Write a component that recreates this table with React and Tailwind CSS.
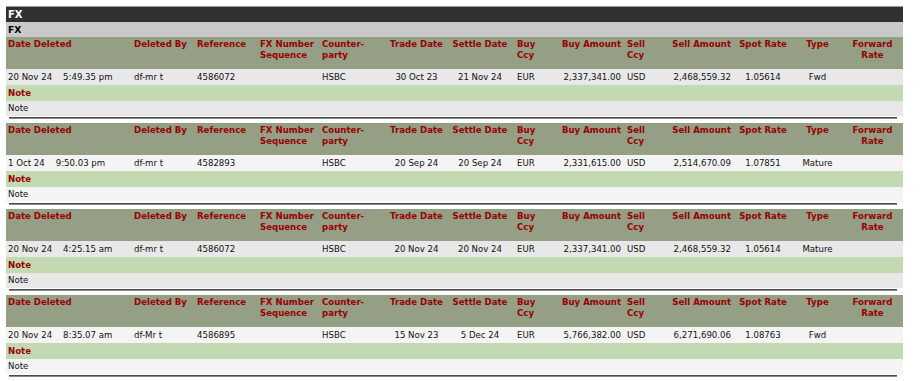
import React from "react";

const COLS =
  "grid grid-cols-[126px_63px_63px_62px_66px_61px_66px_46px_64px_46px_64px_60px_49px_61px]";

const rows = [
  {
    date: "20 Nov 24",
    time: "5:49.35 pm",
    by: "df-mr t",
    ref: "4586072",
    cp: "HSBC",
    trade: "30 Oct 23",
    settle: "21 Nov 24",
    buyCcy: "EUR",
    buyAmt: "2,337,341.00",
    sellCcy: "USD",
    sellAmt: "2,468,559.32",
    spot: "1.05614",
    type: "Fwd",
  },
  {
    date: "1 Oct 24",
    time: "9:50.03 pm",
    by: "df-mr t",
    ref: "4582893",
    cp: "HSBC",
    trade: "20 Sep 24",
    settle: "20 Sep 24",
    buyCcy: "EUR",
    buyAmt: "2,331,615.00",
    sellCcy: "USD",
    sellAmt: "2,514,670.09",
    spot: "1.07851",
    type: "Mature",
  },
  {
    date: "20 Nov 24",
    time: "4:25.15 am",
    by: "df-mr t",
    ref: "4586072",
    cp: "HSBC",
    trade: "20 Nov 24",
    settle: "20 Nov 24",
    buyCcy: "EUR",
    buyAmt: "2,337,341.00",
    sellCcy: "USD",
    sellAmt: "2,468,559.32",
    spot: "1.05614",
    type: "Mature",
  },
  {
    date: "20 Nov 24",
    time: "8:35.07 am",
    by: "df-Mr t",
    ref: "4586895",
    cp: "HSBC",
    trade: "15 Nov 23",
    settle: "5 Dec 24",
    buyCcy: "EUR",
    buyAmt: "5,766,382.00",
    sellCcy: "USD",
    sellAmt: "6,271,690.06",
    spot: "1.08763",
    type: "Fwd",
  },
];

function Header() {
  const c = "pt-[2px] leading-[11px] whitespace-nowrap";
  return (
    <div className={`${COLS} h-[32px] bg-[#949f86] font-bold text-[#990000]`}>
      <div className={`${c} pl-[2px]`}>Date Deleted</div>
      <div className={`${c} pl-[2px]`}>Deleted By</div>
      <div className={`${c} pl-[2px]`}>Reference</div>
      <div className={`${c} pl-[2px]`}>
        FX Number
        <br />
        Sequence
      </div>
      <div className={`${c} pl-[2px]`}>
        Counter-
        <br />
        party
      </div>
      <div className={`${c} text-center`}>Trade Date</div>
      <div className={`${c} text-center`}>Settle Date</div>
      <div className={`${c} pl-[4px]`}>
        Buy
        <br />
        Ccy
      </div>
      <div className={`${c} pr-[2px] text-right`}>Buy Amount</div>
      <div className={`${c} pl-[4px]`}>
        Sell
        <br />
        Ccy
      </div>
      <div className={`${c} pr-[2px] text-right`}>Sell Amount</div>
      <div className={`${c} text-center`}>Spot Rate</div>
      <div className={`${c} text-center`}>Type</div>
      <div className={`${c} text-center`}>
        Forward
        <br />
        Rate
      </div>
    </div>
  );
}

function Block({ r, alt }) {
  const bg = alt ? "bg-[#f4f4f4]" : "bg-[#e8e8e8]";
  const c = "leading-[16px] whitespace-nowrap";
  return (
    <div>
      <Header />
      <div className={`${COLS} h-[16px] ${bg} text-[#111111]`}>
        <div className={`${c} pl-[2px]`}>
          {r.date}
          {"\u00a0\u00a0\u00a0\u00a0"}
          {r.time}
        </div>
        <div className={`${c} pl-[2px]`}>{r.by}</div>
        <div className={`${c} pl-[2px]`}>{r.ref}</div>
        <div className={`${c} pl-[2px]`}></div>
        <div className={`${c} pl-[2px]`}>{r.cp}</div>
        <div className={`${c} text-center`}>{r.trade}</div>
        <div className={`${c} text-center`}>{r.settle}</div>
        <div className={`${c} pl-[4px]`}>{r.buyCcy}</div>
        <div className={`${c} pr-[2px] text-right`}>{r.buyAmt}</div>
        <div className={`${c} pl-[4px]`}>{r.sellCcy}</div>
        <div className={`${c} pr-[2px] text-right`}>{r.sellAmt}</div>
        <div className={`${c} text-center`}>{r.spot}</div>
        <div className={`${c} text-center`}>{r.type}</div>
        <div className={`${c} text-center`}></div>
      </div>
      <div className="h-[16px] bg-[#c3d9b1] pl-[2px] font-bold leading-[16px] text-[#990000]">
        Note
      </div>
      <div className={`h-[15px] ${bg} pl-[2px] leading-[15px] text-[#111111]`}>
        Note
      </div>
      <div className="h-[7px] pt-[1px] pl-[3px] pr-[6px] bg-white">
        <div className="h-[2px] border-t border-t-[#4a4a4a] border-b border-b-[#8a8a8a]"></div>
      </div>
    </div>
  );
}

export default function App() {
  return (
    <div
      className="min-h-screen bg-white pl-[6px] pt-[6px] text-[8.6px]"
      style={{ fontFamily: '"DejaVu Sans", Verdana, sans-serif' }}
    >
      <div className="w-[897px]">
        <div className="h-[16px] border-t border-t-[#9a9a9a] bg-[#313131] pl-[2px] text-[10px] font-bold leading-[15px] text-white">
          FX
        </div>
        <div className="h-[15px] bg-[#c9c9c9] pl-[2px] text-[9.2px] font-bold leading-[15px] text-black">
          FX
        </div>
        {rows.map((r, i) => (
          <Block key={i} r={r} alt={i % 2 === 1} />
        ))}
        <div className="h-[16px] bg-[#c3d9b1]"></div>
      </div>
    </div>
  );
}
